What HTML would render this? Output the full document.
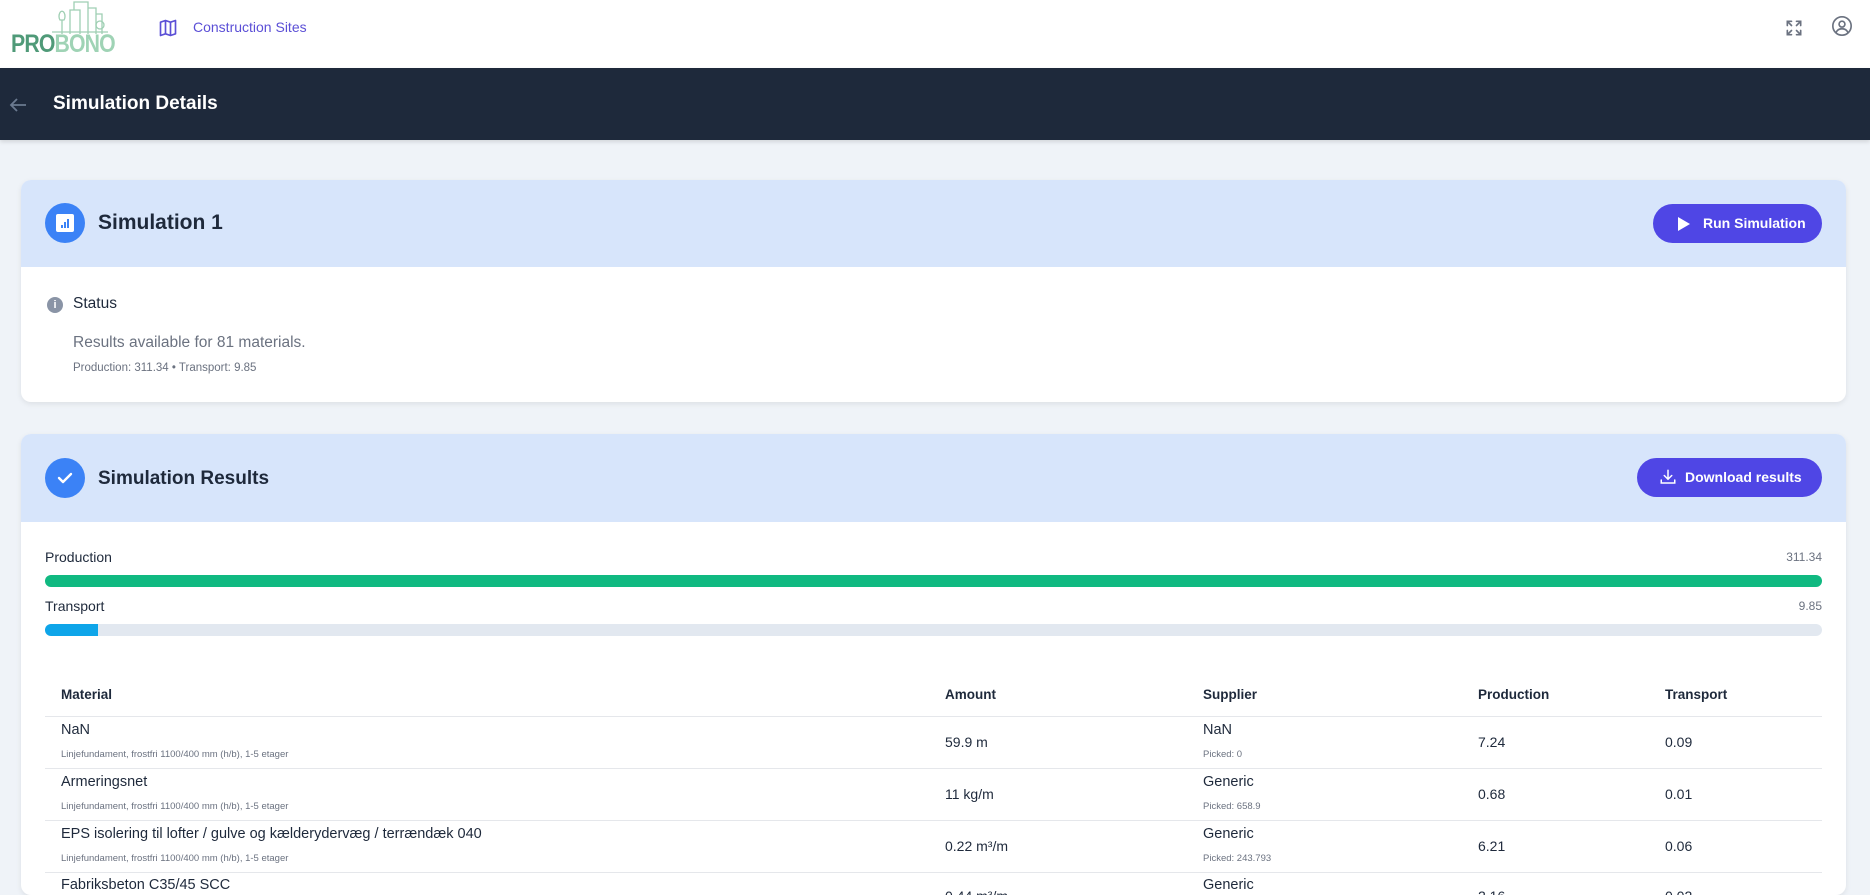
<!DOCTYPE html>
<html style="height:895px;overflow:hidden"><head><meta charset="utf-8"><style>
*{box-sizing:border-box;margin:0;padding:0}
body{width:1870px;height:895px;overflow:hidden;background:#eff3f8;font-family:"Liberation Sans",sans-serif;color:#1e293b;position:relative}
.a{position:absolute}
.top{left:0;top:0;width:1870px;height:68px;background:#fff}
.bar{left:0;top:68px;width:1870px;height:72px;background:#1e293b;box-shadow:0 2px 4px rgba(0,0,0,.12)}
.card{background:#fff;border-radius:10px;box-shadow:0 2px 6px rgba(0,0,0,.08);overflow:hidden}
.hd{background:#d7e5fb;height:87px;position:relative}
.circ{width:40px;height:40px;border-radius:50%;background:#3b82f6}
.btn{background:#4f46e5;color:#fff;border-radius:20px;font-weight:bold;font-size:14px}
.th{font-weight:bold;font-size:13.5px;top:687px}
.line{left:45px;width:1777px;height:1px;background:#e5e7eb}
.nm{font-size:14.5px;left:61px}
.sb{font-size:9.5px;color:#6b7280;left:61px}
.v{font-size:14px}
</style></head><body>
<div class="a top"></div>
<svg class="a" style="left:50px;top:0" width="60" height="36" viewBox="0 0 60 36" fill="none" stroke="#9fcfb3" stroke-width="1.3"><path d="M20 34V10h10v24M24 10V2h14v32M38 8h8v26M46 14h6v20M12 34V20M10 20a3 5 0 1 1 4 0z"/><circle cx="50" cy="25" r="4"/><path d="M2 32h56"/></svg>
<div class="a" style="left:11px;top:30px;font-size:25px;font-weight:bold;letter-spacing:-1px;transform:scaleX(.85);transform-origin:left"><span style="color:#4f9a78">PRO</span><span style="color:#9fd3b5">BONO</span></div>
<svg class="a" style="left:158px;top:18px" width="20" height="20" viewBox="0 0 24 24" fill="none" stroke="#5b4fd6" stroke-width="2" stroke-linejoin="round"><path d="M3 5l6-2 6 2 6-2v16l-6 2-6-2-6 2z M9 3v16 M15 5v16"/></svg>
<div class="a" style="left:193px;top:19px;font-size:14px;color:#5b4fd6">Construction Sites</div>
<svg class="a" style="left:1784px;top:18px" width="20" height="20" viewBox="0 0 24 24" fill="none" stroke="#6b7280" stroke-width="2" stroke-linecap="round"><path d="M4 9V4h5M4 4l5 5M20 9V4h-5M20 4l-5 5M4 15v5h5M4 20l5-5M20 15v5h-5M20 20l-5-5"/></svg>
<svg class="a" style="left:1831px;top:15px" width="22" height="22" viewBox="0 0 24 24" fill="none" stroke="#6b7280" stroke-width="1.8"><circle cx="12" cy="12" r="10"/><circle cx="12" cy="10" r="3.2"/><path d="M5.5 19c1.5-3 4-4 6.5-4s5 1 6.5 4"/></svg>
<div class="a bar"></div>
<svg class="a" style="left:8px;top:96px" width="20" height="18" viewBox="0 0 20 18" fill="none" stroke="#6b7a90" stroke-width="1.8"><path d="M18 9H3M9 3L3 9l6 6"/></svg>
<div class="a" style="left:53px;top:93px;font-size:19px;font-weight:bold;color:#fff">Simulation Details</div>

<div class="a card" style="left:21px;top:180px;width:1825px;height:222px">
 <div class="hd">
  <div class="a circ" style="left:24px;top:23px"></div>
  <div class="a" style="left:35px;top:34px;width:18px;height:18px;background:#fff;border-radius:2px"></div>
  <div class="a" style="left:40px;top:45px;width:2px;height:3px;background:#3b82f6"></div>
  <div class="a" style="left:43px;top:42px;width:2px;height:6px;background:#3b82f6"></div>
  <div class="a" style="left:46px;top:39px;width:2px;height:9px;background:#3b82f6"></div>
  <div class="a" style="left:77px;top:31px;font-size:21px;font-weight:bold">Simulation 1</div>
  <div class="a btn" style="left:1632px;top:24px;width:169px;height:39px"><svg class="a" style="left:24px;top:12px" width="14" height="16" viewBox="0 0 14 16"><path d="M1 1l12 7-12 7z" fill="#fff"/></svg><span class="a" style="left:50px;top:11px">Run Simulation</span></div>
 </div>
 <div class="a" style="left:26px;top:117px;width:16px;height:16px;border-radius:50%;background:#8a94a6;color:#fff;font-size:11px;font-weight:bold;text-align:center;line-height:16px">i</div>
 <div class="a" style="left:52px;top:115px;font-size:15.5px">Status</div>
 <div class="a" style="left:52px;top:154px;font-size:15.5px;color:#6b7280">Results available for 81 materials.</div>
 <div class="a" style="left:52px;top:182px;font-size:11.5px;color:#6b7280">Production: 311.34 • Transport: 9.85</div>
</div>

<div class="a card" style="left:21px;top:434px;width:1825px;height:461px">
 <div class="hd" style="height:88px">
  <div class="a circ" style="left:24px;top:24px"></div>
  <svg class="a" style="left:34px;top:34px" width="20" height="20" viewBox="0 0 20 20" fill="none" stroke="#fff" stroke-width="2.4" stroke-linecap="round" stroke-linejoin="round"><path d="M4 10l4 4 8-8"/></svg>
  <div class="a" style="left:77px;top:34px;font-size:19px;font-weight:bold">Simulation Results</div>
  <div class="a btn" style="left:1616px;top:24px;width:185px;height:39px"><svg class="a" style="left:22px;top:10px" width="18" height="18" viewBox="0 0 24 24" fill="none" stroke="#fff" stroke-width="2" stroke-linecap="round"><path d="M12 3v12M7 10l5 5 5-5M3 16v4h18v-4"/></svg><span class="a" style="left:48px;top:11px">Download results</span></div>
 </div>
</div>
<div class="a" style="left:45px;top:549px;font-size:14px">Production</div>
<div class="a" style="left:1760px;top:550px;width:62px;text-align:right;font-size:12px;color:#6b7280">311.34</div>
<div class="a" style="left:45px;top:575px;width:1777px;height:12px;border-radius:6px;background:#10b981"></div>
<div class="a" style="left:45px;top:598px;font-size:14px">Transport</div>
<div class="a" style="left:1760px;top:599px;width:62px;text-align:right;font-size:12px;color:#6b7280">9.85</div>
<div class="a" style="left:45px;top:624px;width:1777px;height:12px;border-radius:6px;background:#e2e8f0"></div>
<div class="a" style="left:45px;top:624px;width:53px;height:12px;border-radius:6px 0 0 6px;background:#0ea5e9"></div>

<div class="a th" style="left:61px">Material</div>
<div class="a th" style="left:945px">Amount</div>
<div class="a th" style="left:1203px">Supplier</div>
<div class="a th" style="left:1478px">Production</div>
<div class="a th" style="left:1665px">Transport</div>
<div class="a line" style="top:716px"></div>
<div class="a line" style="top:768px"></div>
<div class="a line" style="top:820px"></div>
<div class="a line" style="top:872px"></div>

<div class="a nm" style="top:722px">NaN</div>
<div class="a sb" style="top:749px">Linjefundament, frostfri 1100/400 mm (h/b), 1-5 etager</div>
<div class="a v" style="left:945px;top:734px">59.9 m</div>
<div class="a nm" style="left:1203px;top:722px">NaN</div>
<div class="a sb" style="left:1203px;top:749px">Picked: 0</div>
<div class="a v" style="left:1478px;top:734px">7.24</div>
<div class="a v" style="left:1665px;top:734px">0.09</div>

<div class="a nm" style="top:774px">Armeringsnet</div>
<div class="a sb" style="top:801px">Linjefundament, frostfri 1100/400 mm (h/b), 1-5 etager</div>
<div class="a v" style="left:945px;top:786px">11 kg/m</div>
<div class="a nm" style="left:1203px;top:774px">Generic</div>
<div class="a sb" style="left:1203px;top:801px">Picked: 658.9</div>
<div class="a v" style="left:1478px;top:786px">0.68</div>
<div class="a v" style="left:1665px;top:786px">0.01</div>

<div class="a nm" style="top:826px">EPS isolering til lofter / gulve og kælderydervæg / terrændæk 040</div>
<div class="a sb" style="top:853px">Linjefundament, frostfri 1100/400 mm (h/b), 1-5 etager</div>
<div class="a v" style="left:945px;top:838px">0.22 m³/m</div>
<div class="a nm" style="left:1203px;top:826px">Generic</div>
<div class="a sb" style="left:1203px;top:853px">Picked: 243.793</div>
<div class="a v" style="left:1478px;top:838px">6.21</div>
<div class="a v" style="left:1665px;top:838px">0.06</div>

<div class="a nm" style="top:877px">Fabriksbeton C35/45 SCC</div>
<div class="a v" style="left:945px;top:888px">0.44 m³/m</div>
<div class="a nm" style="left:1203px;top:877px">Generic</div>
<div class="a v" style="left:1478px;top:888px">2.16</div>
<div class="a v" style="left:1665px;top:888px">0.02</div>
</body></html>
